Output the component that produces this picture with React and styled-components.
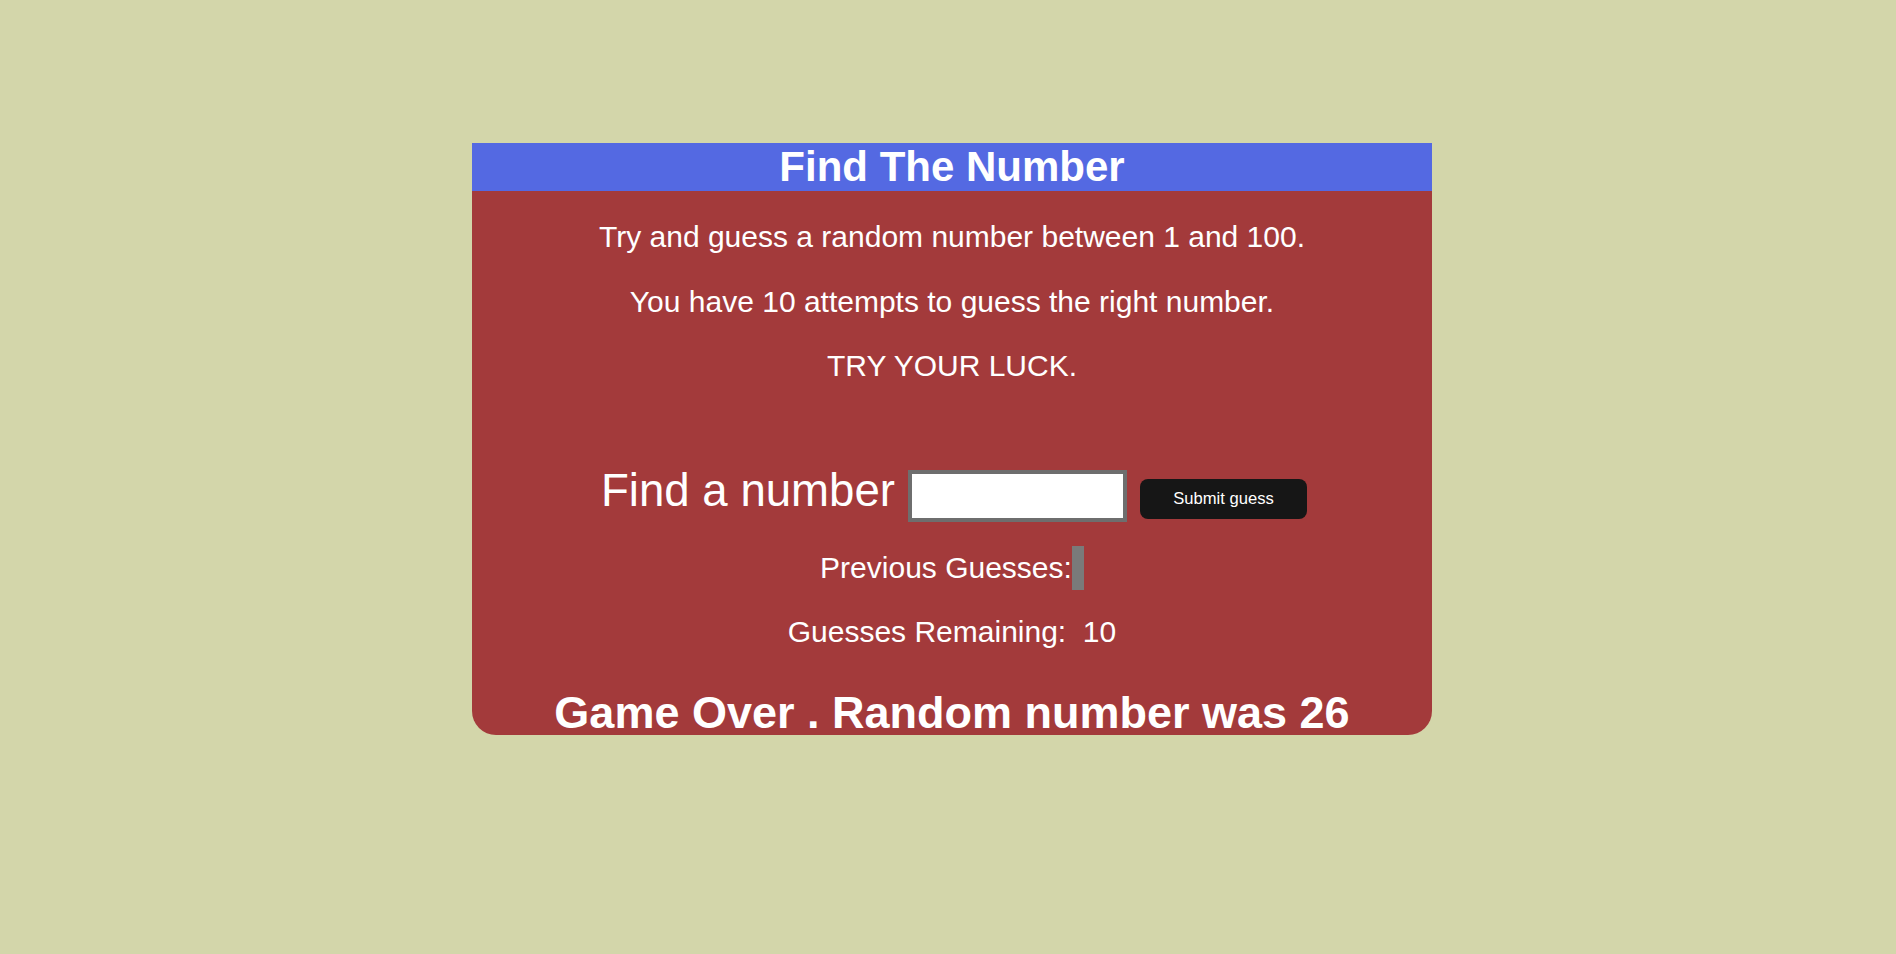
import React from "react";
import styled, { createGlobalStyle } from "styled-components";

const GlobalStyle = createGlobalStyle`
  html, body {
    margin: 0;
    padding: 0;
    background-color: #d3d6aa;
    font-family: "Liberation Sans", Arial, sans-serif;
  }
`;

const Page = styled.div`
  min-height: 954px;
  display: flex;
  justify-content: center;
  align-items: flex-start;
  padding: 143px 0 0 8px;
  box-sizing: border-box;
`;

const Card = styled.div`
  width: 960px;
  background-color: #a33a3b;
  border-radius: 0 0 24px 24px;
  color: #ffffff;
  text-align: center;
`;

const Header = styled.h1`
  margin: 0;
  height: 48px;
  line-height: 48px;
  background-color: #5469e2;
  font-size: 42px;
  font-weight: 700;
`;

const Intro = styled.p`
  margin: 29px 0 30px;
  font-size: 30px;
  line-height: 34.5px;
  & + & {
    margin-top: 0;
  }
`;

const Form = styled.form`
  display: flex;
  justify-content: center;
  align-items: flex-end;
  gap: 13px;
  margin: 81px 0 0 4px;
  height: 57px;
`;

const Label = styled.label`
  font-size: 45.6px;
  line-height: 52px;
  margin-bottom: 5px;
`;

const Input = styled.input`
  width: 219px;
  height: 52px;
  box-sizing: border-box;
  border: 4px solid #6e6e6e;
  background: #ffffff;
  font-size: 20px;
  padding: 0 8px;
  outline: none;
`;

const Button = styled.button`
  width: 167px;
  height: 40px;
  border: none;
  border-radius: 8px;
  background-color: #161616;
  color: #ffffff;
  font-family: "Liberation Sans", Arial, sans-serif;
  font-size: 16.6px;
  margin-bottom: 3px;
  cursor: pointer;
`;

const InfoRow = styled.div`
  display: flex;
  justify-content: center;
  align-items: center;
  margin-top: ${(p) => p.$top}px;
  height: ${(p) => p.$height}px;
  font-size: 30px;
  white-space: pre;
`;

const GuessBox = styled.span`
  display: inline-block;
  width: 12px;
  height: 44px;
  background-color: #7a7a7a;
`;

const Result = styled.h2`
  margin: 41px 0 0;
  font-size: 45px;
  line-height: 44px;
  font-weight: 700;
`;

const App = () => {
  return (
    <>
      <GlobalStyle />
      <Page>
        <Card>
          <Header>Find The Number</Header>
          <Intro>Try and guess a random number between 1 and 100.</Intro>
          <Intro>You have 10 attempts to guess the right number.</Intro>
          <Intro>TRY YOUR LUCK.</Intro>
          <Form onSubmit={(e) => e.preventDefault()}>
            <Label htmlFor="guess">Find a number</Label>
            <Input id="guess" type="text" />
            <Button type="submit">Submit guess</Button>
          </Form>
          <InfoRow $top={24} $height={44}>
            Previous Guesses:<GuessBox />
          </InfoRow>
          <InfoRow $top={25} $height={35}>
            Guesses Remaining:  10
          </InfoRow>
          <Result>Game Over . Random number was 26</Result>
        </Card>
      </Page>
    </>
  );
};

export default App;
